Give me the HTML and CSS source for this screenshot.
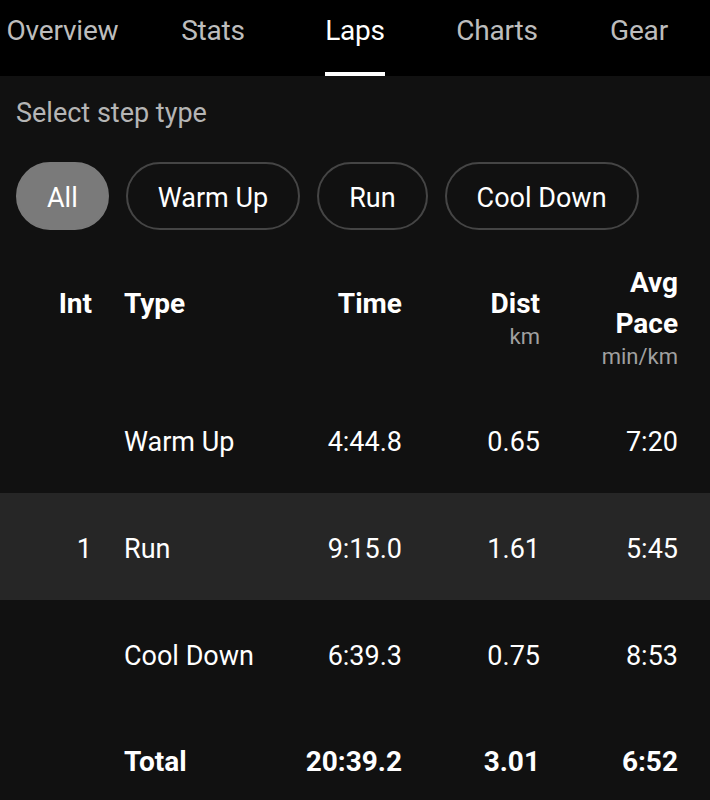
FILE: index.html
```html
<!DOCTYPE html>
<html lang="en">
<head>
    <meta charset="UTF-8">
    <title>Laps</title>
    <link rel="stylesheet" href="styles.css">
</head>
<body>
    <nav class="tabs">
        <div class="tab tab-first"><span class="tab-label">Overview</span></div>
        <div class="tab"><span class="tab-label">Stats</span></div>
        <div class="tab"><span class="tab-label active">Laps</span></div>
        <div class="tab"><span class="tab-label">Charts</span></div>
        <div class="tab"><span class="tab-label">Gear</span></div>
    </nav>

    <div class="filter-title">Select step type</div>
    <div class="chips">
        <button class="chip selected">All</button>
        <button class="chip">Warm Up</button>
        <button class="chip">Run</button>
        <button class="chip">Cool Down</button>
    </div>

    <div class="laps">
        <div class="row head">
            <div class="cell num">Int</div>
            <div class="cell type">Type</div>
            <div class="cell num">Time</div>
            <div class="cell num">
                <div class="title">Dist</div>
                <div class="unit">km</div>
            </div>
            <div class="cell num">
                <div class="title">Avg<br>Pace</div>
                <div class="unit">min/km</div>
            </div>
        </div>
        <div class="row">
            <div class="cell num"></div>
            <div class="cell type">Warm Up</div>
            <div class="cell num">4:44.8</div>
            <div class="cell num">0.65</div>
            <div class="cell num">7:20</div>
        </div>
        <div class="row alt">
            <div class="cell num">1</div>
            <div class="cell type">Run</div>
            <div class="cell num">9:15.0</div>
            <div class="cell num">1.61</div>
            <div class="cell num">5:45</div>
        </div>
        <div class="row">
            <div class="cell num"></div>
            <div class="cell type">Cool Down</div>
            <div class="cell num">6:39.3</div>
            <div class="cell num">0.75</div>
            <div class="cell num">8:53</div>
        </div>
        <div class="row total">
            <div class="cell num"></div>
            <div class="cell type">Total</div>
            <div class="cell num">20:39.2</div>
            <div class="cell num">3.01</div>
            <div class="cell num">6:52</div>
        </div>
    </div>
</body>
</html>
```

FILE: styles.css
```css
body {
    margin: 0;
    background: #111;
    color: #fff;
    font-family: Roboto, 'Noto Sans', sans-serif;
    overflow: hidden;
}
.tabs {
    display: grid;
    grid-template-columns: repeat(5, 1fr);
    height: 76px;
    background: #000;
}
.tab {
    display: flex;
    justify-content: center;
}
.tab-first {
    padding-right: 17px;
}
.tab-label {
    box-sizing: border-box;
    height: 76px;
    display: flex;
    align-items: center;
    padding-bottom: 12px;
    border-bottom: 4px solid transparent;
    font-size: 28px;
    letter-spacing: -0.2px;
    color: #bdbdbd;
}
.tab-label.active {
    color: #fff;
    border-bottom-color: #fff;
}
.filter-title {
    padding: 21px 16px 0;
    font-size: 27px;
    color: #b5b5b5;
}
.chips {
    display: flex;
    gap: 17px;
    padding: 33px 16px 0;
}
.chip {
    box-sizing: border-box;
    height: 68px;
    padding: 3px 30px 0;
    border: 2px solid #454545;
    border-radius: 34px;
    background: transparent;
    color: #fff;
    font-family: inherit;
    font-size: 27px;
}
.chip.selected {
    padding: 3px 29px 0;
    background: #7a7a7a;
    border-color: #7a7a7a;
}
.row {
    box-sizing: border-box;
    display: grid;
    grid-template-columns: 92px 1fr 140px 138px 138px;
    align-items: center;
    height: 107px;
    padding: 4px 32px 0 0;
    font-size: 27px;
}
.row.alt {
    background: #262626;
}
.row.head {
    height: auto;
    padding-top: 32px;
    padding-bottom: 42px;
    font-size: 28px;
    font-weight: bold;
}
.row.total {
    padding-top: 2px;
    font-size: 28px;
    font-weight: bold;
}
.cell.num {
    text-align: right;
}
.cell.type {
    padding-left: 32px;
}
.head .cell {
    line-height: 41px;
}
.unit {
    line-height: 26px;
    margin-bottom: -26px;
    font-size: 22px;
    font-weight: normal;
    color: #a0a0a0;
}
```
